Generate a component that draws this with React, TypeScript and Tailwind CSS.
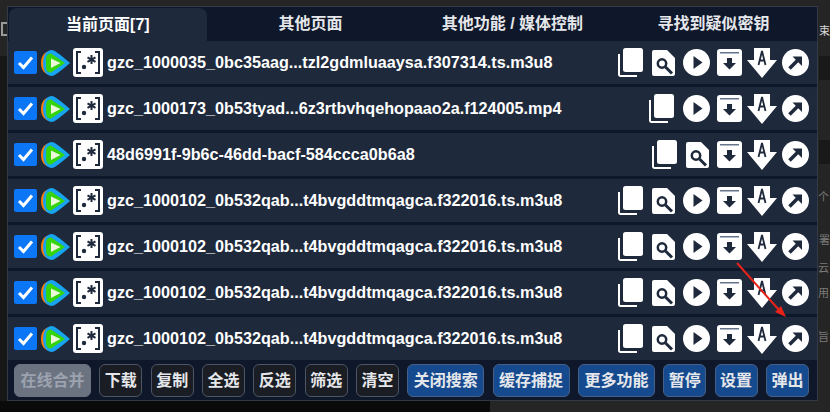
import { ReactNode } from "react";

const FONT = "font-['Liberation_Sans','Noto_Sans_CJK_SC',sans-serif]";

function Check() {
  return (
    <div className="w-[23px] h-[23px] bg-[#0b76f6] rounded-[2px] flex items-center justify-center shrink-0">
      <svg width="17" height="15" viewBox="0 0 17 15">
        <path d="M2 8l4.500 4.500L15 2.500" fill="none" stroke="#fff" strokeWidth="3" />
      </svg>
    </div>
  );
}

function VideoLogo() {
  return (
    <svg width="29" height="26" viewBox="0 0 29 26" className="shrink-0">
      <path d="M7 1.500C2 3 0 8 0 13s2 10 7 11.500z" fill="#ff7a00" />
      <path d="M4 4Q7 0 11 0q3 0 18 13Q14 26 11 26q-4 0-7-4Q2 18 2 13t2-9z" fill="#18a4f0" />
      <path d="M5.500 6Q7 3 10 3.500L24 13 10 22.500Q7 23 5.500 20 5 17 5 13t.5-7z" fill="#35d40c" />
      <path d="M10 8.500l9.500 4.500-9.500 5z" fill="#eaf7d8" />
    </svg>
  );
}

function RegexIcon() {
  return (
    <div className="w-[30px] h-[29px] bg-white rounded-[3px] flex items-center justify-center shrink-0">
      <svg width="26" height="25" viewBox="0 0 26 25">
        <path d="M6 2H2v21h4M20 2h4v21h-4" fill="none" stroke="#1e293b" strokeWidth="2" />
        <circle cx="9" cy="17" r="2.200" fill="#1e293b" />
        <path d="M16.500 5v9M12.500 7.300l8 4.600M20.500 7.300l-8 4.600" stroke="#1e293b" strokeWidth="2" />
      </svg>
    </div>
  );
}

function CopyIcon() {
  return (
    <svg width="26" height="29" viewBox="0 0 26 29" className="shrink-0">
      <rect x="5" y="0" width="20" height="24" rx="2.500" fill="#fff" />
      <path d="M1 6v20.500a1.500 1.500 0 0 0 1.500 1.500H19" fill="none" stroke="#fff" strokeWidth="2" />
    </svg>
  );
}

function SearchIcon() {
  return (
    <svg width="23" height="26" viewBox="0 0 23 26" className="shrink-0">
      <path d="M2 0h13l8 8v16a2 2 0 0 1-2 2H2a2 2 0 0 1-2-2V2a2 2 0 0 1 2-2z" fill="#fff" />
      <circle cx="10" cy="13.500" r="4.200" fill="none" stroke="#1e293b" strokeWidth="2.500" />
      <path d="M13.500 17l6.500 6.500" stroke="#1e293b" strokeWidth="3" />
    </svg>
  );
}

function PlayIcon() {
  return (
    <svg width="27" height="27" viewBox="0 0 27 27" className="shrink-0">
      <circle cx="13.500" cy="13.500" r="13.500" fill="#fff" />
      <path d="M10.500 7l9 6.500-9 6.500z" fill="#1e293b" />
    </svg>
  );
}

function DownloadIcon() {
  return (
    <svg width="25" height="27" viewBox="0 0 25 27" className="shrink-0">
      <rect x="0" y="0" width="25" height="27" rx="3" fill="#fff" />
      <rect x="3" y="3" width="19" height="1.500" fill="#64748b" />
      <path d="M10 9h5v5h4l-6.500 6.500L6 14h4z" fill="#1e293b" />
    </svg>
  );
}

function AriaIcon() {
  return (
    <svg width="30" height="30" viewBox="0 0 30 30" className="shrink-0">
      <path d="M7 0h16v12h7L15 30 0 12h7z" fill="#fff" />
      <path d="M11.500 17L15 3l3.500 14M12.500 12.500h5" fill="none" stroke="#1e293b" strokeWidth="1.800" />
    </svg>
  );
}

function PopIcon() {
  return (
    <svg width="27" height="27" viewBox="0 0 27 27" className="shrink-0">
      <circle cx="13.500" cy="13.500" r="13.500" fill="#fff" />
      <path d="M7.500 19.500l8-8" stroke="#1e293b" strokeWidth="3.500" />
      <path d="M10.500 7.500h9.500v9.500z" fill="#1e293b" />
    </svg>
  );
}

type RowData = { name: string; search?: boolean; play?: boolean };

const m3u8 = "gzc_1000102_0b532qab...t4bvgddtmqagca.f322016.ts.m3u8";

const rows: RowData[] = [
  { name: "gzc_1000035_0bc35aag...tzl2gdmluaaysa.f307314.ts.m3u8", search: true, play: true },
  { name: "gzc_1000173_0b53tyad...6z3rtbvhqehopaao2a.f124005.mp4", play: true },
  { name: "48d6991f-9b6c-46dd-bacf-584ccca0b6a8", search: true },
  { name: m3u8, search: true, play: true },
  { name: m3u8, search: true, play: true },
  { name: m3u8, search: true, play: true },
  { name: m3u8, search: true, play: true },
];

function Row({ row }: { row: RowData }) {
  return (
    <div className="h-[43px] bg-[#1e293b] flex items-center pl-[6px] pr-[8px]">
      <Check />
      <div className="ml-[4px]"><VideoLogo /></div>
      <div className="ml-[3px]"><RegexIcon /></div>
      <span className="ml-[4px] text-[16.200px] font-bold text-white whitespace-nowrap">{row.name}</span>
      <div className="ml-auto flex items-center gap-[8px]">
        <CopyIcon />
        {row.search && <SearchIcon />}
        {row.play && <div className="-mr-[1px]"><PlayIcon /></div>}
        <DownloadIcon />
        <div className="-mx-[3px]"><AriaIcon /></div>
        <PopIcon />
      </div>
    </div>
  );
}

function Btn({ children, kind, wide }: { children: ReactNode; kind: "gray" | "dark" | "blue"; wide?: boolean }) {
  const cls =
    kind === "gray"
      ? "bg-[#6b7280] text-[#9ca3af] border-[#6b7280]"
      : kind === "dark"
        ? "bg-[#1a1d23] text-[#e5e7eb] border-[#4b5563]"
        : "bg-[#164a8e] text-[#e5e7eb] border-[#475e86]";
  return (
    <div className={`${wide ? "w-[77px]" : "w-[43px]"} h-[33px] border rounded-[6px] flex items-center justify-center text-[16px] font-bold whitespace-nowrap ${cls}`}>
      {children}
    </div>
  );
}

export default function App() {
  return (
    <div className={`relative w-[830px] h-[412px] overflow-hidden bg-[#252525] ${FONT}`}>
      {/* page behind the panel */}
      <div className="absolute left-0 top-[56px] w-[7px] h-[345px] bg-[#171717]" />
      <div className="absolute left-[1px] top-[22px] w-[6px] h-[14px] border-2 border-r-0 border-[#9a9a9a]" />
      <div className="absolute left-0 top-[401px] w-[490px] h-[11px] bg-[#0a0a0a]" />
      <div className="absolute left-[819px] top-[56px] w-[11px] h-[24px] bg-[#191919]" />
      <div className="absolute left-[819px] top-[140px] w-[11px] h-[24px] bg-[#191919]" />
      <span className="absolute left-[819px] top-[25px] text-[11px] leading-[13px] text-[#d8d8d8]">束</span>
      <span className="absolute left-[818px] top-[191px] text-[11px] leading-[13px] text-[#7a7a7a]">个</span>
      <span className="absolute left-[819px] top-[234px] text-[11px] leading-[13px] text-[#7a7a7a]">署</span>
      <span className="absolute left-[818px] top-[262px] text-[11px] leading-[13px] text-[#7a7a7a]">云</span>
      <span className="absolute left-[818px] top-[287px] text-[11px] leading-[13px] text-[#7a7a7a]">用</span>
      <span className="absolute left-[818px] top-[331px] text-[11px] leading-[13px] text-[#7a7a7a]">旨</span>

      <div className="absolute left-[7px] top-[6px] w-[811px] h-[395px] bg-[#0f172a] border border-[#333a45] flex flex-col">
        <div className="h-[34px] flex items-stretch text-[16px] font-bold text-[#e5e7eb]">
          <div className="w-[198px] ml-[1px] mt-[1px] bg-[#1e293b] rounded-t-[8px] flex items-center justify-center text-white">当前页面[7]</div>
          <div className="w-[208px] flex items-center justify-center">其他页面</div>
          <div className="w-[196px] flex items-center justify-center">其他功能 / 媒体控制</div>
          <div className="w-[207px] flex items-center justify-center">寻找到疑似密钥</div>
        </div>
        <div className="flex flex-col gap-[3px]">
          {rows.map((r, i) => (
            <Row key={i} row={r} />
          ))}
        </div>
        <div className="mt-[4px] flex items-center justify-between pl-[6px] pr-[8px]">
          <Btn kind="gray" wide>在线合并</Btn>
          <Btn kind="dark">下载</Btn>
          <Btn kind="dark">复制</Btn>
          <Btn kind="dark">全选</Btn>
          <Btn kind="dark">反选</Btn>
          <Btn kind="dark">筛选</Btn>
          <Btn kind="dark">清空</Btn>
          <Btn kind="blue" wide>关闭搜索</Btn>
          <Btn kind="blue" wide>缓存捕捉</Btn>
          <Btn kind="blue" wide>更多功能</Btn>
          <Btn kind="blue">暂停</Btn>
          <Btn kind="blue">设置</Btn>
          <Btn kind="blue">弹出</Btn>
        </div>
      </div>
      {/* red annotation arrow */}
      <svg className="absolute left-0 top-0" width="830" height="412">
        <path d="M737 263L780 311" stroke="#e8231a" strokeWidth="2" />
        <path d="M786 317l-11-5 6-6z" fill="#e8231a" />
      </svg>
    </div>
  );
}
